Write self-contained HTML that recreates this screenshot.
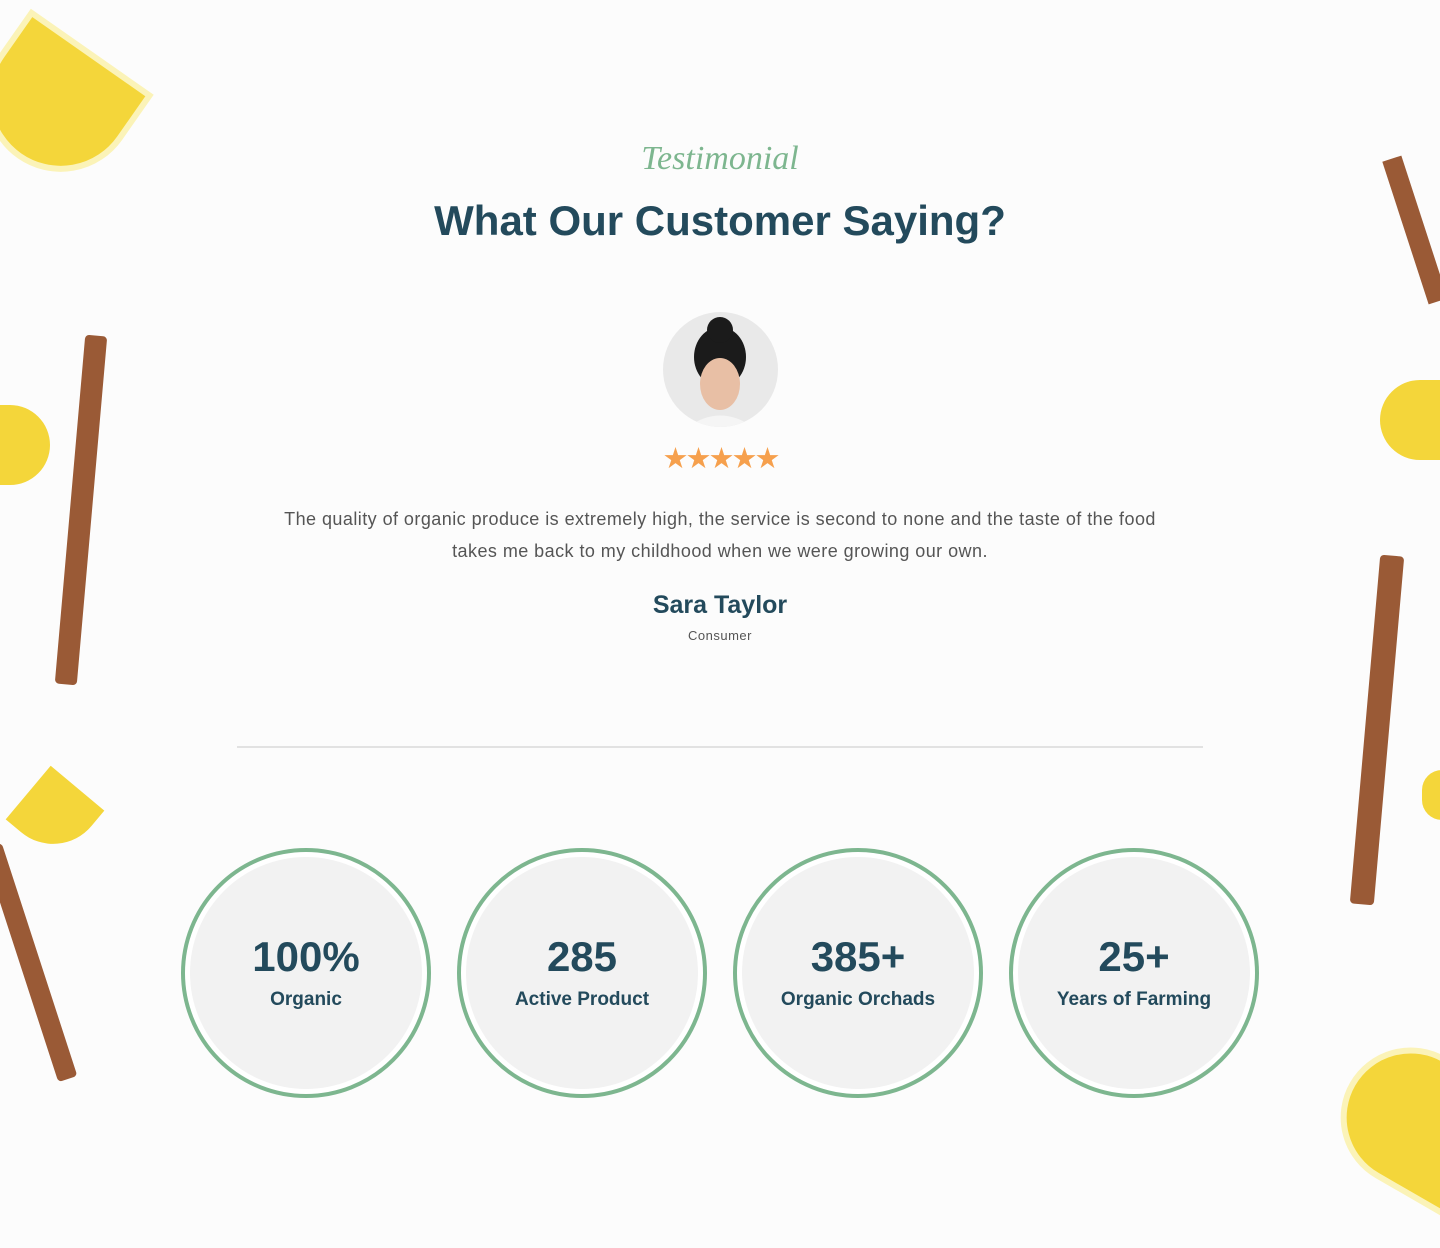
<!DOCTYPE html>
<html><head><meta charset="utf-8"><style>
*{margin:0;padding:0;box-sizing:border-box}
body{width:1440px;height:1248px;background:#fcfcfc;position:relative;overflow:hidden;font-family:"Liberation Sans",sans-serif;color:#234a5c}
.abs{position:absolute}
.sub{left:0;width:1440px;top:140px;text-align:center;font-family:"Liberation Serif",serif;font-style:italic;font-size:34px;color:#7db68f}
h1{position:absolute;left:0;width:1440px;top:197px;text-align:center;font-size:42px;font-weight:bold;color:#234a5c}
.av{left:663px;top:312px;width:115px;height:115px;border-radius:50%;background:#e9e9e9;overflow:hidden}
.stars{left:0;width:1440px;top:441px;text-align:center;color:#f6a04d;font-size:29px;letter-spacing:-3px}
.q{left:0;width:1440px;top:503px;text-align:center;font-size:18px;letter-spacing:0.45px;line-height:32px;color:#555}
.n{left:0;width:1440px;top:591px;text-align:center;font-size:25px;font-weight:bold}
.r{left:0;width:1440px;top:628px;text-align:center;font-size:13px;letter-spacing:0.5px;color:#555}
.hr{left:237px;width:966px;top:746px;height:2px;background:#e2e2e2}
.c{top:848px;width:250px;height:250px;border-radius:50%;border:4px solid #7db68f;padding:5px;background:#fff}
.c div{width:100%;height:100%;border-radius:50%;background:#f2f2f2;text-align:center;padding-top:76px}
.c b{display:block;font-size:42px;line-height:48px}
.c span{display:block;font-size:19px;font-weight:bold;margin-top:8px}
</style></head><body>
<div class="abs" style="left:-20px;top:40px;width:150px;height:130px;border-radius:0 0 150px 150px;background:#f4d63a;border:6px solid #fbf3b8;transform:rotate(35deg)"></div>
<div class="abs" style="left:70px;top:335px;width:22px;height:350px;background:#9a5a36;transform:rotate(5deg);border-radius:4px"></div>
<div class="abs" style="left:-20px;top:405px;width:70px;height:80px;background:#f4d63a;border-radius:0 40px 40px 0"></div>
<div class="abs" style="left:20px;top:780px;width:70px;height:70px;background:#f4d63a;transform:rotate(40deg);border-radius:0 0 50px 0"></div>
<div class="abs" style="left:20px;top:840px;width:20px;height:245px;background:#9a5a36;transform:rotate(-18deg);border-radius:4px"></div>
<div class="abs" style="left:1405px;top:155px;width:20px;height:150px;background:#9a5a36;transform:rotate(-18deg)"></div>
<div class="abs" style="left:1380px;top:380px;width:80px;height:80px;background:#f4d63a;border-radius:50% 0 0 50%"></div>
<div class="abs" style="left:1365px;top:555px;width:24px;height:350px;background:#9a5a36;transform:rotate(5deg);border-radius:4px"></div>
<div class="abs" style="left:1340px;top:1050px;width:150px;height:140px;border-radius:70px 0 0 70px;background:#f4d63a;border:6px solid #fbf3b8;transform:rotate(30deg)"></div>
<div class="abs" style="left:1422px;top:770px;width:30px;height:50px;background:#f4d63a;border-radius:20px 0 0 20px"></div>

<div class="abs sub">Testimonial</div>
<h1>What Our Customer Saying?</h1>
<div class="abs av"><svg width="115" height="115"><ellipse cx="57" cy="45" rx="26" ry="30" fill="#1b1b1b"/><circle cx="57" cy="18" r="13" fill="#1b1b1b"/><ellipse cx="57" cy="72" rx="20" ry="26" fill="#e8bfa5"/><path d="M25 115 Q57 92 90 115Z" fill="#f5f5f5"/></svg></div>
<div class="abs stars">★★★★★</div>
<div class="abs q">The quality of organic produce is extremely high, the service is second to none and the taste of the food<br>takes me back to my childhood when we were growing our own.</div>
<div class="abs n">Sara Taylor</div>
<div class="abs r">Consumer</div>
<div class="abs hr"></div>
<div class="abs c" style="left:181px"><div><b>100%</b><span>Organic</span></div></div>
<div class="abs c" style="left:457px"><div><b>285</b><span>Active Product</span></div></div>
<div class="abs c" style="left:733px"><div><b>385+</b><span>Organic Orchads</span></div></div>
<div class="abs c" style="left:1009px"><div><b>25+</b><span>Years of Farming</span></div></div>
</body></html>
